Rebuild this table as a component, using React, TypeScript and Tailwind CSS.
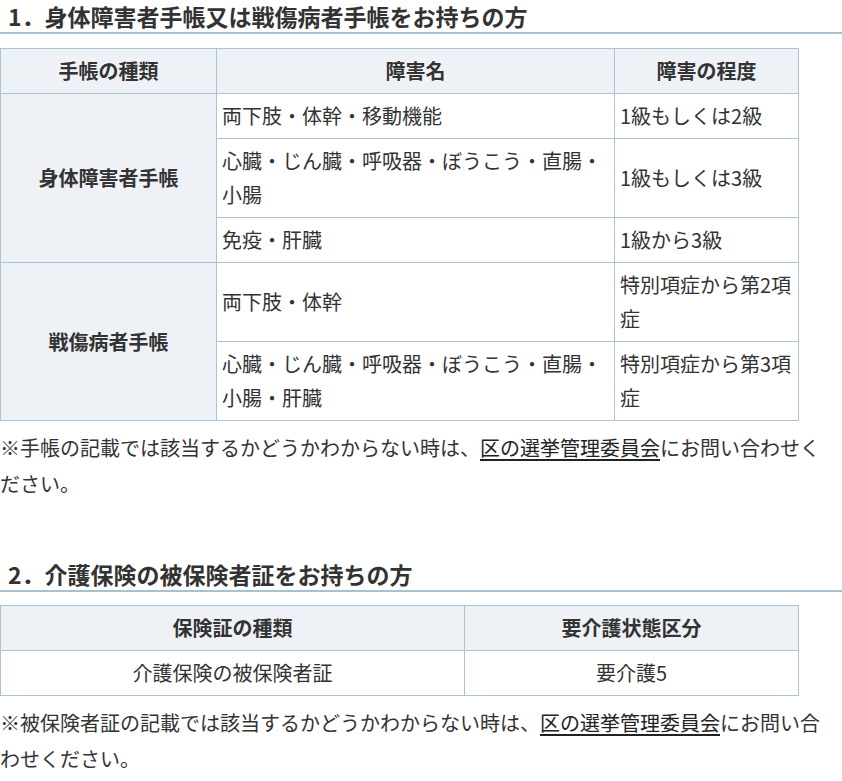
import React from 'react'

const font = { fontFamily: '"Noto Sans CJK JP", "Noto Sans", sans-serif' }

const th = 'border border-[#a9c4d2] bg-[#eef2f7] px-[5px] py-[5px] text-center font-bold'
const td = 'border border-[#a9c4d2] px-[5px] py-[5px] text-left align-middle'
const tdCenter = 'border border-[#a9c4d2] px-[5px] py-[5px] text-center align-middle'
const tdHead = 'border border-[#a9c4d2] bg-[#eef2f7] px-[5px] py-[5px] text-center font-bold align-middle'

function Heading({ children, className = '' }: { children: React.ReactNode; className?: string }) {
  return (
    <h2 className={`border-b-2 border-[#a7c1cf] pl-2 text-[23px] font-bold leading-[32px] text-[#333] ${className}`}>
      {children}
    </h2>
  )
}

function Note({ prefix, suffix }: { prefix: string; suffix: string }) {
  return (
    <p className="mt-[9px] w-[830px] text-[20px] leading-[36px] text-[#333]">
      {prefix}
      <a href="#" className="text-[#222] underline decoration-[1.5px] underline-offset-[3px]">区の選挙管理委員会</a>
      {suffix}
    </p>
  )
}

export default function App() {
  return (
    <div className="w-[842px] bg-white text-[#333]" style={font}>
      <Heading>1．身体障害者手帳又は戦傷病者手帳をお持ちの方</Heading>

      <table className="mt-[14px] w-[798px] table-fixed border-collapse text-[20px] leading-[34px]">
        <colgroup>
          <col className="w-[216px]" />
          <col className="w-[398px]" />
          <col className="w-[184px]" />
        </colgroup>
        <thead>
          <tr>
            <th className={th}>手帳の種類</th>
            <th className={th}>障害名</th>
            <th className={th}>障害の程度</th>
          </tr>
        </thead>
        <tbody>
          <tr>
            <td rowSpan={3} className={tdHead}>身体障害者手帳</td>
            <td className={td}>両下肢・体幹・移動機能</td>
            <td className={td}>1級もしくは2級</td>
          </tr>
          <tr>
            <td className={td}>心臓・じん臓・呼吸器・ぼうこう・直腸・小腸</td>
            <td className={td}>1級もしくは3級</td>
          </tr>
          <tr>
            <td className={td}>免疫・肝臓</td>
            <td className={td}>1級から3級</td>
          </tr>
          <tr>
            <td rowSpan={2} className={tdHead}>戦傷病者手帳</td>
            <td className={td}>両下肢・体幹</td>
            <td className={td}>特別項症から第2項症</td>
          </tr>
          <tr>
            <td className={td}>心臓・じん臓・呼吸器・ぼうこう・直腸・小腸・肝臓</td>
            <td className={td}>特別項症から第3項症</td>
          </tr>
        </tbody>
      </table>

      <Note prefix="※手帳の記載では該当するかどうかわからない時は、" suffix="にお問い合わせください。" />

      <Heading className="mt-[56px]">2．介護保険の被保険者証をお持ちの方</Heading>

      <table className="mt-[13px] w-[798px] table-fixed border-collapse text-[20px] leading-[34px]">
        <colgroup>
          <col className="w-[464px]" />
          <col className="w-[334px]" />
        </colgroup>
        <thead>
          <tr>
            <th className={th}>保険証の種類</th>
            <th className={th}>要介護状態区分</th>
          </tr>
        </thead>
        <tbody>
          <tr>
            <td className={tdCenter}>介護保険の被保険者証</td>
            <td className={tdCenter}>要介護5</td>
          </tr>
        </tbody>
      </table>

      <Note prefix="※被保険者証の記載では該当するかどうかわからない時は、" suffix="にお問い合わせください。" />
    </div>
  )
}
